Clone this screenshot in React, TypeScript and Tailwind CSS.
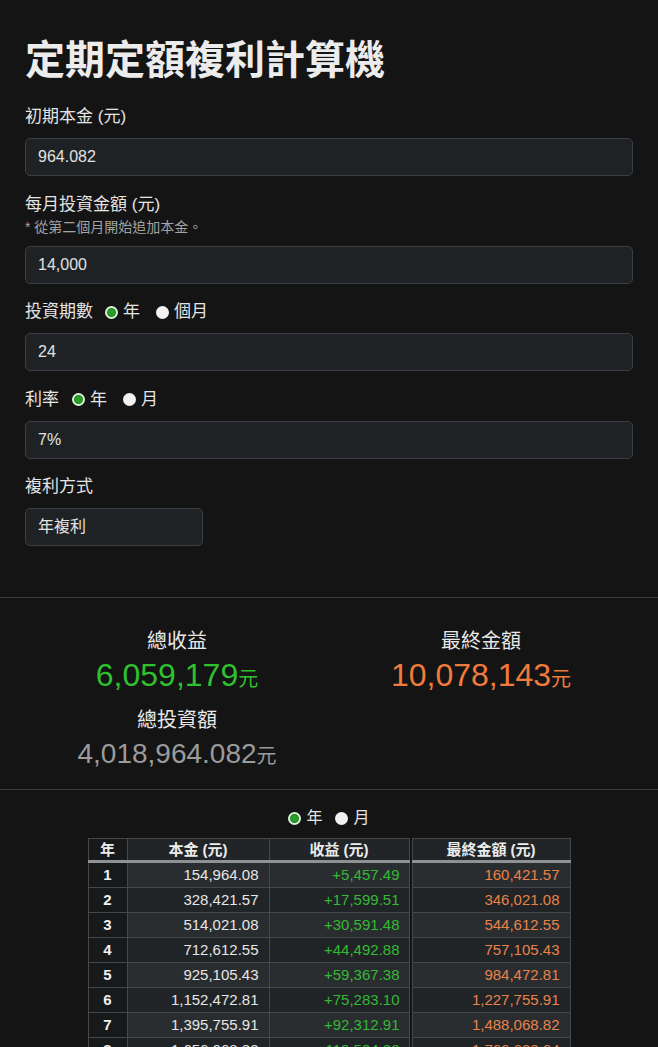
import React from "react";

const MONTHLY = 14000;
const RATE = 0.07;

function buildRows() {
  const rows: { year: number; principal: number; gain: number; total: number }[] = [];
  let balance = 964.082;
  for (let year = 1; year <= 24; year++) {
    const months = year === 1 ? 11 : 12;
    const principal = balance + MONTHLY * months;
    const gain = balance * RATE + ((MONTHLY * RATE) / 12) * ((months * (months + 1)) / 2);
    const total = principal + gain;
    rows.push({ year, principal, gain, total });
    balance = total;
  }
  return rows;
}

const fmt = (n: number) =>
  n.toLocaleString("en-US", { minimumFractionDigits: 2, maximumFractionDigits: 2 });

function Radio({ checked }: { checked: boolean }) {
  return checked ? (
    <span className="inline-block h-[13px] w-[13px] shrink-0 rounded-full border-2 border-[#d9f3d9] bg-[#2a9e2a] shadow-[inset_0_0_0_1px_#1e7a1e]" />
  ) : (
    <span className="inline-block h-[13px] w-[13px] shrink-0 rounded-full bg-[#f2f2f2]" />
  );
}

function Field({ label, value, note }: { label: React.ReactNode; value: string; note?: string }) {
  return (
    <div className="mb-[16.5px]">
      <div className="h-[24px] text-[17px] leading-[24px] text-[#e4e4e4]">{label}</div>
      {note && <div className="text-[14px] leading-[20px] text-[#a3a3a3]">{note}</div>}
      <input
        readOnly
        value={value}
        className="mt-[9px] block h-[38px] w-full rounded-[5px] border border-[#3b3f43] bg-[#1f2225] px-[12px] text-[16px] text-[#e2e2e2] outline-none"
      />
    </div>
  );
}

function PeriodLabel({ name, a, b, gap }: { name: string; a: string; b: string; gap: string }) {
  return (
    <span className="flex h-[24px] items-center">
      <span>{name}</span>
      <span className={`flex items-center ${gap}`}>
        <Radio checked />
        <span className="ml-[5px]">{a}</span>
      </span>
      <span className="ml-[16px] flex items-center">
        <Radio checked={false} />
        <span className="ml-[5px]">{b}</span>
      </span>
    </span>
  );
}

function Stat({ label, value, size, color }: { label: string; value: string; size: string; color: string }) {
  return (
    <div>
      <div className="h-[30px] text-[20px] leading-[30px] text-[#e8e8e8]">{label}</div>
      <div className={`flex h-[38px] items-baseline justify-center leading-[38px] ${color}`}>
        <span className={size}>{value}</span>
        <span className="text-[20px]">元</span>
      </div>
    </div>
  );
}

export default function App() {
  const rows = buildRows();
  return (
    <div className="min-h-screen bg-[#141414] font-['Liberation_Sans','Noto_Sans_CJK_TC',sans-serif] text-[#e4e4e4]">
      <div className="px-[25px] pt-[36px]">
        <h1 className="mb-[21px] text-[40px] font-bold leading-[48px] text-[#ececec]">定期定額複利計算機</h1>
        <Field label="初期本金 (元)" value="964.082" />
        <Field label="每月投資金額 (元)" note="* 從第二個月開始追加本金。" value="14,000" />
        <Field label={<PeriodLabel name="投資期數" a="年" b="個月" gap="ml-[12px]" />} value="24" />
        <Field label={<PeriodLabel name="利率" a="年" b="月" gap="ml-[13px]" />} value="7%" />
        <div className="h-[24px] text-[17px] leading-[24px]">複利方式</div>
        <div className="mt-[9px] flex h-[38px] w-[178px] items-center rounded-[5px] border border-[#3b3f43] bg-[#1f2225] px-[12px] text-[16px] text-[#e2e2e2]">
          年複利
        </div>
      </div>

      <div className="mt-[51px] border-t border-[#3a3a3a] px-[25px] pb-[16px] pt-[28px]">
        <div className="grid grid-cols-2 gap-y-[11px] text-center">
          <Stat label="總收益" value="6,059,179" size="text-[32px]" color="text-[#30c030]" />
          <Stat label="最終金額" value="10,078,143" size="text-[32px]" color="text-[#ef7b3c]" />
          <Stat label="總投資額" value="4,018,964.082" size="text-[28px]" color="text-[#9b9b9b]" />
        </div>
      </div>

      <div className="border-t border-[#3a3a3a] pt-[18px]">
        <div className="flex h-[20px] items-center justify-center text-[16px] leading-[20px]">
          <Radio checked />
          <span className="ml-[5px]">年</span>
          <span className="ml-[12px] flex">
            <Radio checked={false} />
          </span>
          <span className="ml-[6px]">月</span>
        </div>
        <table className="mx-auto mt-[10px] border-collapse text-[15px] leading-[24px]">
          <thead>
            <tr className="bg-[#222528] font-bold leading-[21px] text-[#ececec]">
              <th className="h-[22px] w-[39px] border border-b-[3px] border-[#44474b] border-b-[#8f9295] bg-[#17191b] p-0">年</th>
              <th className="h-[22px] w-[142px] border border-b-[3px] border-[#44474b] border-b-[#8f9295] p-0">本金 (元)</th>
              <th className="h-[22px] w-[140px] border border-b-[3px] border-[#44474b] border-b-[#8f9295] p-0">收益 (元)</th>
              <th className="w-[3px] bg-[#141414] p-0" />
              <th className="h-[22px] w-[158px] border border-b-[3px] border-[#44474b] border-b-[#8f9295] p-0">最終金額 (元)</th>
            </tr>
          </thead>
          <tbody>
            {rows.map((r) => (
              <tr key={r.year} className={r.year % 2 === 1 ? "bg-[#2a2d30]" : "bg-[#212427]"}>
                <td className="border border-[#44474b] bg-[#17191b] text-center font-bold text-[#f0f0f0]">{r.year}</td>
                <td className="border border-[#44474b] pr-[10px] text-right text-[#e6e6e6]">{fmt(r.principal)}</td>
                <td className="border border-[#44474b] pr-[9px] text-right text-[#34b934]">+{fmt(r.gain)}</td>
                <td className="bg-[#141414] p-0" />
                <td className="border border-[#44474b] pr-[10px] text-right text-[#e8834a]">{fmt(r.total)}</td>
              </tr>
            ))}
          </tbody>
        </table>
        <div className="h-[30px]" />
      </div>
    </div>
  );
}
